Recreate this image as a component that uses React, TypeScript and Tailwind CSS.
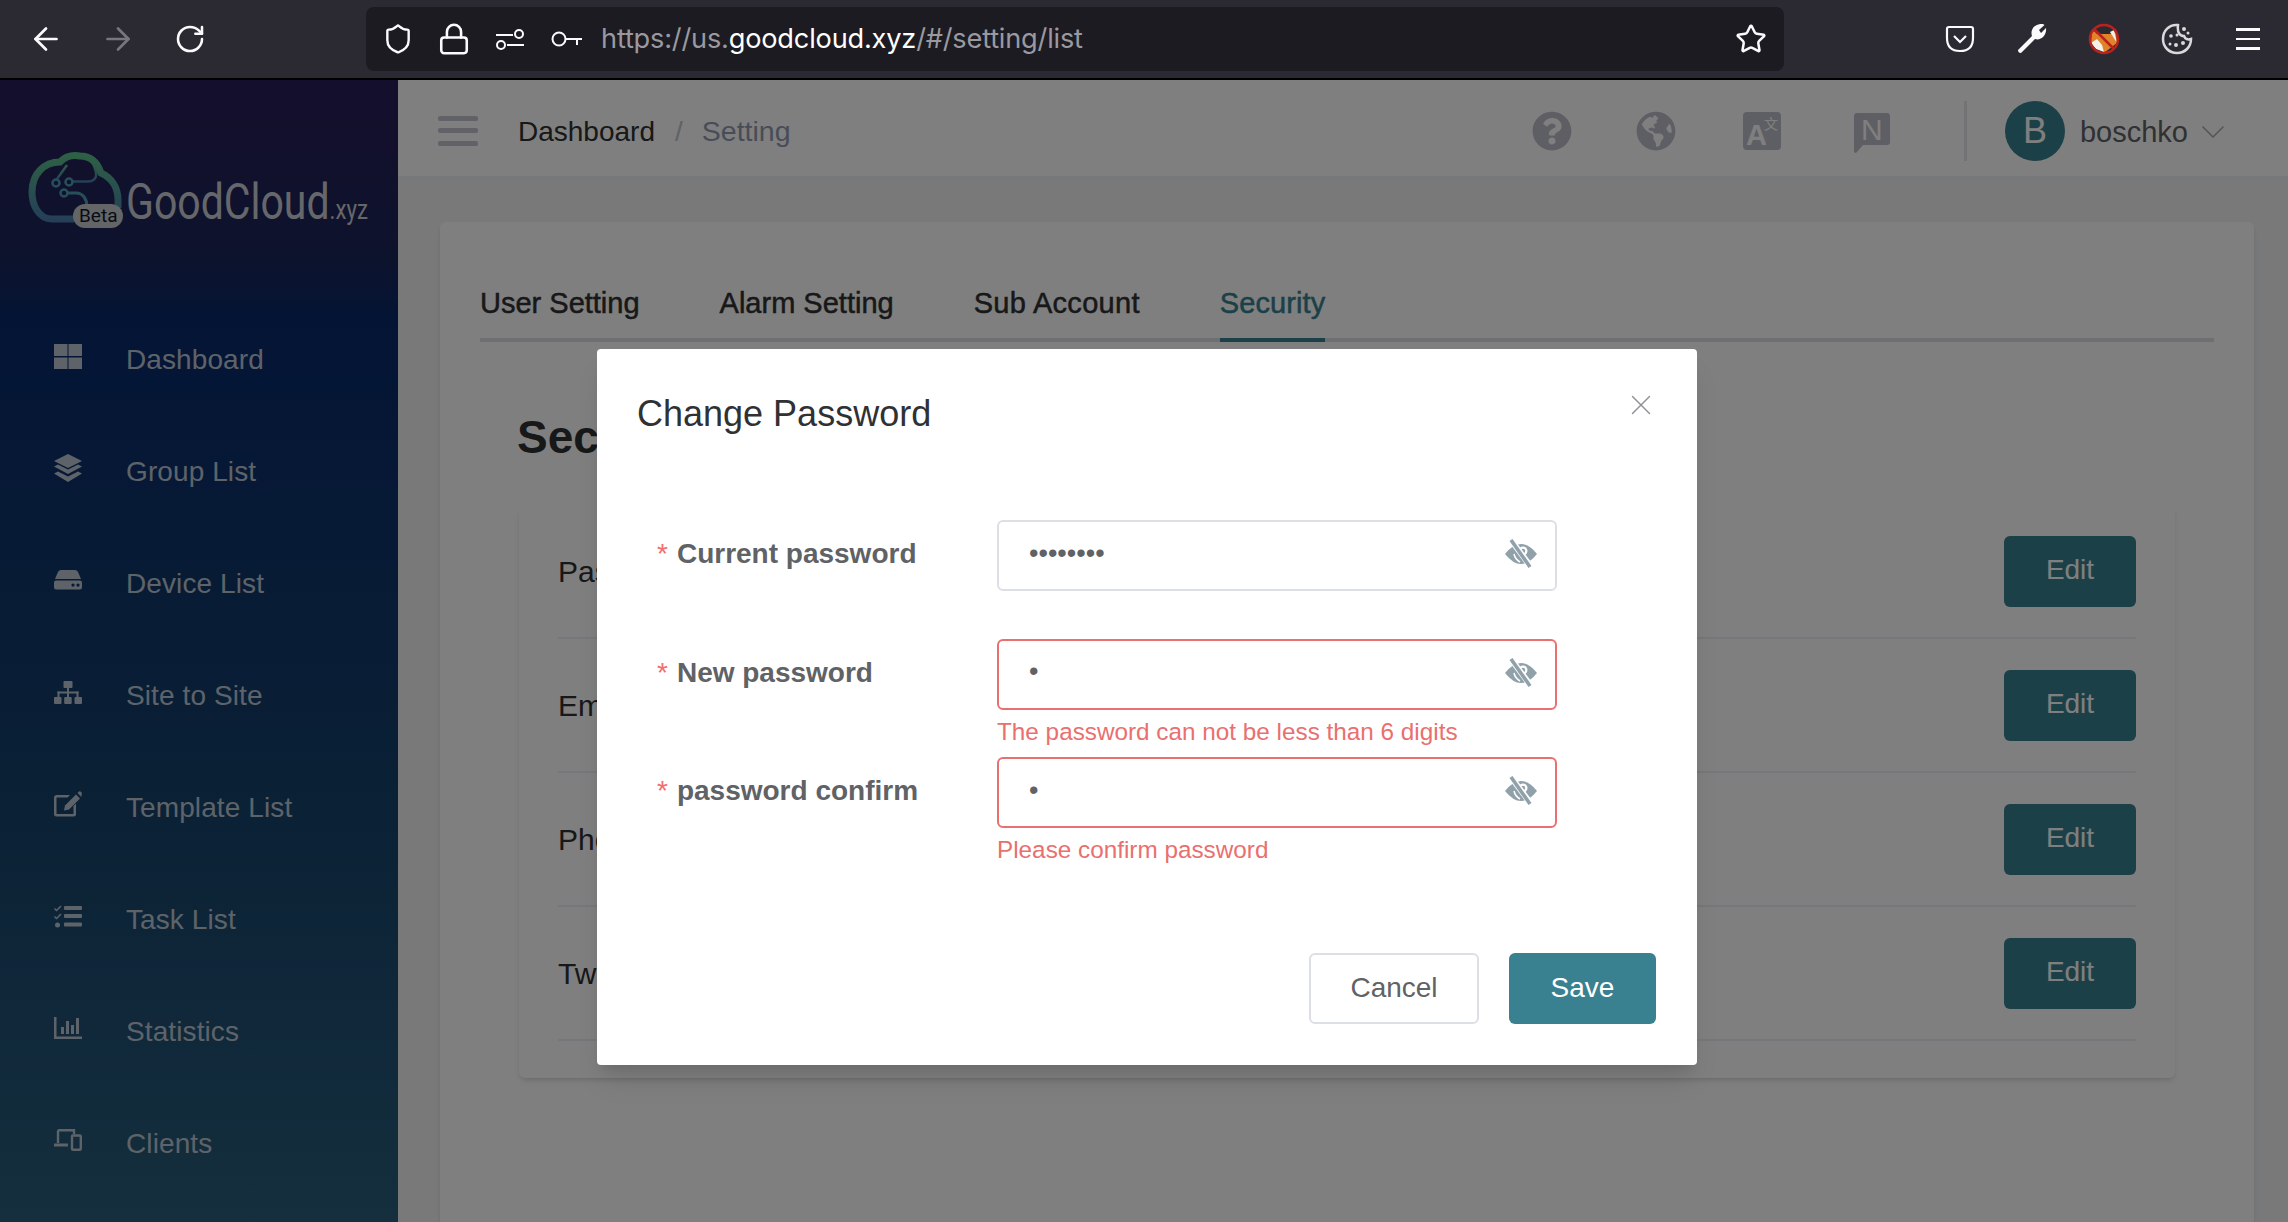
import React from 'react';
import { ArrowLeft, ArrowRight, RotateCw, Shield, Lock, Star, ChevronDown, X } from 'lucide-react';
import { FaQuestionCircle, FaGlobeAmericas } from 'react-icons/fa';

const DashboardIcon = () => (
  <svg width="28" height="25" viewBox="0 0 28 25" fill="currentColor">
    <rect x="0" y="0" width="13.5" height="12" />
    <rect x="14.5" y="0" width="13.5" height="12" />
    <rect x="0" y="13.5" width="13.5" height="11.5" />
    <rect x="14.5" y="13.5" width="13.5" height="11.5" />
  </svg>
);

const LayersIcon = () => (
  <svg width="28" height="28" viewBox="0 0 28 28" fill="currentColor">
    <path d="M14 0 28 7 14 14 0 7Z" />
    <path d="M0 12.5 4 10.5 14 15.5 24 10.5 28 12.5 14 20Z" />
    <path d="M0 19.5 4 17.5 14 22.5 24 17.5 28 19.5 14 28Z" />
  </svg>
);

const DriveIcon = () => (
  <svg width="28" height="20" viewBox="0 0 28 20" fill="currentColor">
    <path d="M7 0H21Q23 0 24 2L27 9H1L4 2Q5 0 7 0Z" />
    <path fillRule="evenodd" d="M2 10.5H26Q28 10.5 28 12.5V17.5Q28 19.5 26 19.5H2Q0 19.5 0 17.5V12.5Q0 10.5 2 10.5ZM19 13.5a1.6 1.6 0 1 0 .01 0ZM24 13.5a1.6 1.6 0 1 0 .01 0Z" />
  </svg>
);

const SitemapIcon = () => (
  <svg width="28" height="23" viewBox="0 0 28 23" fill="currentColor">
    <rect x="9.5" y="0" width="9" height="7" rx="1" />
    <rect x="13" y="7" width="2" height="9" />
    <rect x="3.5" y="10.5" width="21" height="2" />
    <rect x="3.5" y="10.5" width="2" height="6" />
    <rect x="22.5" y="10.5" width="2" height="6" />
    <rect x="0" y="16" width="7.5" height="7" rx="1" />
    <rect x="10.2" y="16" width="7.5" height="7" rx="1" />
    <rect x="20.5" y="16" width="7.5" height="7" rx="1" />
  </svg>
);

const EditIcon = () => (
  <svg width="28" height="26" viewBox="0 0 28 26" fill="currentColor">
    <path d="M3 4H16L13.5 6.5H3Q2.5 6.5 2.5 7V22.5Q2.5 23 3 23H19Q19.5 23 19.5 22.5V15L22 12.5V23Q22 25.5 19.5 25.5H2.500Q0 25.500 0 23V6.500Q0 4 3 4Z" />
    <path d="M22 3.500 26 7.500 15 18.500 10 19.500 11 14.500Z" />
    <path d="M23.500 2 25 .5Q25.800 0 26.500 .5L27.700 1.800Q28.300 2.500 27.700 3.200L27.300 6Z" />
  </svg>
);

const TasksIcon = () => (
  <svg width="28" height="23" viewBox="0 0 28 23" fill="currentColor">
    <path d="M1 3 2.500 4.500 6.500 .5 7.500 1.500 2.500 6.500 0 4Z" />
    <path d="M1 11 2.500 12.500 6.500 8.500 7.500 9.500 2.500 14.500 0 12Z" />
    <circle cx="3.500" cy="20" r="2.500" />
    <rect x="10" y="1" width="18" height="4" rx="1" />
    <rect x="10" y="9" width="18" height="4" rx="1" />
    <rect x="10" y="17.500" width="18" height="4" rx="1" />
  </svg>
);

const ChartIcon = () => (
  <svg width="28" height="22" viewBox="0 0 28 22" fill="currentColor">
    <path d="M0 0H2.500V19.500H28V22H0Z" />
    <rect x="7" y="10" width="3" height="7" />
    <rect x="12" y="4" width="3" height="13" />
    <rect x="17" y="8" width="3" height="9" />
    <rect x="22" y="1" width="3" height="16" />
  </svg>
);

const DevicesIcon = () => (
  <svg width="28" height="22" viewBox="0 0 28 22" fill="none" stroke="currentColor" strokeWidth="2.400">
    <path d="M4 14V2.500Q4 1.200 5.500 1.200H20V5" />
    <path d="M0 16H14" strokeWidth="3" />
    <rect x="18" y="6.500" width="8.800" height="14.300" rx="1" />
  </svg>
);

const EyeOff = () => (
  <svg width="34" height="30" viewBox="0 0 34 30">
    <path d="M1 15Q9 5 17 5T33 15Q25 25 17 25T1 15Z" fill="#90a1aa" />
    <circle cx="19" cy="12" r="4.500" fill="#fff" />
    <circle cx="19" cy="12" r="2.200" fill="#90a1aa" />
    <path d="M10 15Q11 20 16 23" stroke="#fff" strokeWidth="1.500" fill="none" />
    <path d="M7 1 27 28" stroke="#fff" strokeWidth="6" />
    <path d="M7 1 26 28" stroke="#90a1aa" strokeWidth="3.600" />
  </svg>
);

const LogoMark = () => (
  <svg width="94" height="78" viewBox="0 0 94 78" fill="none">
    <defs>
      <linearGradient id="cloud" x1="0" y1="0" x2="0" y2="1">
        <stop offset="0" stopColor="#5cc08a" />
        <stop offset="1" stopColor="#4a7fb0" />
      </linearGradient>
    </defs>
    <path d="M46 67H24C10 67 4 52 4 40 4 22 16 10 32 10 38 4 46 3 52 4 64 4 70 12 73 21 84 26 90 36 90 48V56" stroke="url(#cloud)" strokeWidth="7" />
    <path d="M29 27 39 13M45 29.500H60C66 29.500 69 26 68 20 67 16 66 13 64 10" stroke="url(#cloud)" strokeWidth="2.500" />
    <path d="M40 41H48C55 41 59 47 59 55" stroke="#4c9fb4" strokeWidth="3" />
    <circle cx="28" cy="31" r="3.500" stroke="#4c9fb4" strokeWidth="2.500" />
    <circle cx="41" cy="30" r="3.500" stroke="#4c9fb4" strokeWidth="2.500" />
    <circle cx="36" cy="41" r="3.500" stroke="#4c9fb4" strokeWidth="2.500" />
  </svg>
);

const navItems = [
  { label: 'Dashboard', icon: <DashboardIcon /> },
  { label: 'Group List', icon: <LayersIcon /> },
  { label: 'Device List', icon: <DriveIcon /> },
  { label: 'Site to Site', icon: <SitemapIcon /> },
  { label: 'Template List', icon: <EditIcon /> },
  { label: 'Task List', icon: <TasksIcon /> },
  { label: 'Statistics', icon: <ChartIcon /> },
  { label: 'Clients', icon: <DevicesIcon /> },
];

const BrowserBar = () => (
  <div className="flex h-[80px] shrink-0 items-center border-b-2 border-black bg-[#2b2a33] text-[#fbfbfe]">
    <div className="flex w-[366px] shrink-0 items-center pl-[28px] gap-[36px]">
      <ArrowLeft size={36} strokeWidth={1.800} />
      <ArrowRight size={36} strokeWidth={1.800} className="text-[#77767d]" />
      <RotateCw size={32} strokeWidth={1.900} className="ml-[2px]" />
    </div>
    <div className="flex h-[64px] w-[1418px] shrink-0 items-center rounded-lg bg-[#1c1b22] pl-[16px] pr-[16px]">
      <Shield size={32} strokeWidth={1.800} />
      <Lock size={34} strokeWidth={1.800} className="ml-[23px]" />
      <svg width="30" height="24" viewBox="0 0 30 24" fill="none" stroke="currentColor" strokeWidth="2" className="ml-[24px]">
        <path d="M1 8H18" />
        <circle cx="24" cy="7" r="4" />
        <circle cx="6" cy="18" r="4" />
        <path d="M12 18H29" />
      </svg>
      <svg width="32" height="20" viewBox="0 0 32 20" fill="none" stroke="currentColor" strokeWidth="2" className="ml-[26px]">
        <circle cx="8" cy="10" r="6.500" />
        <path d="M15 10H31M26 10V16" />
      </svg>
      <div className="ml-[18px] flex-1 font-['Inter',sans-serif] text-[27.200px] tracking-[-0.2px] text-[#9a999f]">
        https://us.<span className="text-white">goodcloud.xyz</span>/#/setting/list
      </div>
      <Star size={32} strokeWidth={1.900} className="mr-[1px]" />
    </div>
    <div className="flex flex-1 items-center pl-[161px]">
      <svg width="30" height="30" viewBox="0 0 30 30" fill="none" stroke="currentColor" strokeWidth="2.200">
        <path d="M4 3H26Q28 3 28 5V14Q28 27 15 27T2 14V5Q2 3 4 3Z" />
        <path d="M9 12 15 18 21 12" />
      </svg>
      <svg width="32" height="32" viewBox="0 0 32 32" fill="currentColor" className="ml-[41px]">
        <path d="M2 27 16 13C14 7 18 1 26 1 27 1 28 1.500 28.500 2L23 7 25 10 30 5C31 12 25 18 19 16L5 30Q2 30 2 27Z" />
      </svg>
      <svg width="32" height="32" viewBox="0 0 32 32" className="ml-[40px]">
        <path d="M4 6 9 11 23 11 28 6 29 20 16 30 3 20Z" fill="#e0832a" />
        <path d="M3 20 9 16 14 22 16 29 8 26Z" fill="#f4f1ea" />
        <path d="M29 20 22 9 26 7Z" fill="#f4f1ea" />
        <circle cx="16" cy="16" r="14" fill="none" stroke="#b9231c" strokeWidth="2.500" />
        <path d="M6 6 26 26" stroke="#b9231c" strokeWidth="2.500" />
      </svg>
      <svg width="32" height="32" viewBox="0 0 32 32" className="ml-[41px] text-[#d9d9dc]" fill="none" stroke="currentColor" strokeWidth="2.500">
        <path d="M17 2C8 1 2 8 2 16c0 8 6 14 14 14s14-6 14-14c-3 1-6 0-7-3-4 0-7-3-6-11Z" />
        <circle cx="10" cy="13" r="1.800" fill="currentColor" stroke="none" />
        <circle cx="15" cy="22" r="2" fill="currentColor" stroke="none" />
        <circle cx="22" cy="20" r="2" fill="currentColor" stroke="none" />
        <circle cx="9" cy="21" r="1.500" fill="currentColor" stroke="none" />
        <circle cx="16" cy="12" r="1.500" fill="currentColor" stroke="none" />
        <circle cx="23" cy="6" r="2" fill="currentColor" stroke="none" />
        <circle cx="27" cy="10" r="1.500" fill="currentColor" stroke="none" />
      </svg>
      <div className="ml-[43px] flex flex-col gap-[7px]">
        <div className="h-[2.500px] w-[24px] bg-current" />
        <div className="h-[2.500px] w-[24px] bg-current" />
        <div className="h-[2.500px] w-[24px] bg-current" />
      </div>
    </div>
  </div>
);

const Sidebar = () => (
  <aside className="flex w-[398px] shrink-0 flex-col bg-[linear-gradient(180deg,#2a1e58_0%,#1c2658_15%,#08296a_21%,#14406a_60%,#2a5e7c_100%)] text-[#bdc6d2]">
    <div className="flex h-[224px] shrink-0 items-start pl-[28px] pt-[72px]">
      <div className="relative">
        <LogoMark />
        <span className="absolute left-[45px] top-[52px] rounded-[12px] bg-[#c8cacd] px-[6px] font-['Roboto',sans-serif] text-[19px] leading-[24px] text-[#11182a]">Beta</span>
      </div>
      <div className="ml-[4px] mt-[20px] flex origin-left scale-x-[0.82] items-baseline font-['Roboto',sans-serif] text-[#ccced4]">
        <span className="text-[50px] leading-[60px]">GoodCloud</span>
        <span className="text-[27px]">.xyz</span>
      </div>
    </div>
    {navItems.map((item) => (
      <div key={item.label} className="flex h-[112px] shrink-0 items-center pl-[54px]">
        <div className="mb-[8px] flex w-[28px] justify-center">{item.icon}</div>
        <span className="ml-[44px] text-[28px] tracking-[0.1px]">{item.label}</span>
      </div>
    ))}
  </aside>
);

const Topbar = () => (
  <div className="flex h-[99px] shrink-0 items-center border-b-[3px] border-[#eef0f3] bg-white pl-[40px] pt-[5px]">
    <div className="flex w-[40px] flex-col gap-[7.500px]">
      <div className="h-[5px] rounded-[2px] bg-[#c2c4d0]" />
      <div className="h-[5px] rounded-[2px] bg-[#c2c4d0]" />
      <div className="h-[5px] rounded-[2px] bg-[#c2c4d0]" />
    </div>
    <span className="ml-[40px] mt-[2px] text-[28px] text-[#303133]">Dashboard</span>
    <span className="ml-[20px] mt-[2px] text-[28px] text-[#c0c4cc]">/</span>
    <span className="ml-[19px] mt-[2px] text-[28.500px] text-[#8f9bb0]">Setting</span>
    <div className="flex-1" />
    <FaQuestionCircle size={40} className="text-[#bdbec9]" />
    <FaGlobeAmericas size={40} className="ml-[64px] text-[#bdbec9]" />
    <svg width="38" height="38" viewBox="0 0 38 38" className="ml-[66.500px]">
      <rect width="38" height="38" rx="4" fill="#bdbec9" />
      <text x="3" y="33" fontFamily="Liberation Sans" fontWeight="700" fontSize="29" fill="#fff">A</text>
      <text x="21" y="17" fontFamily="Noto Sans CJK SC" fontSize="14" fill="#fff">文</text>
    </svg>
    <svg width="36" height="40" viewBox="0 0 36 40" className="ml-[73.500px] mt-[4px]">
      <path d="M3 0H33Q36 0 36 3V29Q36 32 33 32H9L2 40Q0 40 0 38V3Q0 0 3 0Z" fill="#bdbec9" />
      <text x="7" y="27" fontFamily="Liberation Sans" fontSize="30" fill="#fff">N</text>
    </svg>
    <div className="ml-[74px] h-[60px] w-[3px] bg-[#e6e7ea]" />
    <div className="ml-[37.500px] flex h-[60px] w-[60px] items-center justify-center rounded-full bg-[#398190] text-[36px] text-white">B</div>
    <span className="ml-[15px] mt-[4px] text-[29px] text-[#606266]">boschko</span>
    <ChevronDown size={40} strokeWidth={0.900} className="ml-[4.500px] mt-[2px] text-[#a6a9ad]" />
    <div className="w-[55.500px]" />
  </div>
);

const securityRows = ['Password', 'Email', 'Phone', 'Two-factor authentication'];

const SettingCard = () => (
  <div className="ml-[42px] mr-[34px] mt-[43px] flex-1 rounded-t-md bg-white px-[40px] shadow-md">
    <div className="flex h-[120px] items-end border-b-4 border-[#dcdde6] text-[29px] text-[#303133] [-webkit-text-stroke:0.5px]">
      <span className="-mb-[4px] mr-[80px] pb-[17px]">User Setting</span>
      <span className="-mb-[4px] mr-[80px] pb-[17px]">Alarm Setting</span>
      <span className="-mb-[4px] mr-[80px] pb-[17px] tracking-[0.3px]">Sub Account</span>
      <span className="-mb-[4px] border-b-4 border-[#398190] pb-[13px] text-[#398190] tracking-[0.1px]">Security</span>
    </div>
    <h2 className="pl-[37px] pt-[67px] text-[46px] font-bold leading-[56px] text-[#303133]">Security</h2>
    <div className="ml-[39px] mr-[39px] mt-[41px] rounded-md bg-white px-[39px] pb-[37px] shadow-md">
      {securityRows.map((row) => (
        <div key={row} className="flex h-[134px] items-center justify-between border-b-[2px] border-[#ebeef5] text-[30px] text-[#303133] first:h-[133px]">
          <span>{row}</span>
          <button className="flex h-[71px] w-[132px] items-center justify-center rounded-md bg-[#398190] pb-[3px] text-[28px] text-white">Edit</button>
        </div>
      ))}
    </div>
  </div>
);

const PasswordField = ({ label, value, error }: { label: string; value: string; error?: string }) => (
  <div className="flex h-[118.500px] pl-[20px]">
    <label className="flex h-[71px] w-[340px] shrink-0 items-center pb-[3px] text-[28px] font-bold text-[#606266]">
      <span className="mr-[9px] font-normal text-[#f56c6c]">*</span>
      {label}
    </label>
    <div className="w-[560px]">
      <div className={`flex h-[71px] items-center rounded-[6px] border-2 bg-white pl-[30px] pr-[17px] ${error ? 'border-[#ea6f6f]' : 'border-[#dcdfe6]'}`}>
        <input
          type="password"
          readOnly
          defaultValue={value}
          className="h-full min-w-0 flex-1 bg-transparent pb-[5px] text-[27px] text-[#606266] outline-none"
        />
        <div className="mb-[3px]">
          <EyeOff />
        </div>
      </div>
      {error && <p className="pt-[4px] text-[24.300px] leading-[36px] text-[#ea6f6f]">{error}</p>}
    </div>
  </div>
);

const ChangePasswordModal = () => (
  <div className="absolute inset-0 flex justify-center bg-black/50 pl-[6px] pt-[269px]">
    <div className="relative h-[716px] w-[1100px] rounded-[4px] bg-white px-[40px] pt-[43px] shadow-xl">
      <h3 className="text-[36px] leading-[44px] text-[#303133]">Change Password</h3>
      <X size={34} strokeWidth={1} className="absolute right-[39px] top-[39px] text-[#8d9095]" />
      <div className="mt-[84px]">
        <PasswordField label="Current password" value="password" />
        <PasswordField label="New password" value="a" error="The password can not be less than 6 digits" />
        <PasswordField label="password confirm" value="a" error="Please confirm password" />
      </div>
      <div className="mt-[77px] flex justify-end gap-[30px] pr-[1px]">
        <button className="h-[71px] w-[170px] rounded-[6px] border-2 border-[#dcdfe6] bg-white text-[28px] text-[#606266]">Cancel</button>
        <button className="h-[71px] w-[147px] rounded-[6px] bg-[#398190] text-[28px] text-white">Save</button>
      </div>
    </div>
  </div>
);

export default function App() {
  return (
    <div className="flex h-[1222px] w-[2288px] flex-col overflow-hidden font-['Liberation_Sans',Arial,sans-serif]">
      <BrowserBar />
      <div className="relative flex min-h-0 flex-1">
        <Sidebar />
        <main className="flex min-w-0 flex-1 flex-col bg-[#f2f3f5]">
          <Topbar />
          <SettingCard />
        </main>
        <ChangePasswordModal />
      </div>
    </div>
  );
}
